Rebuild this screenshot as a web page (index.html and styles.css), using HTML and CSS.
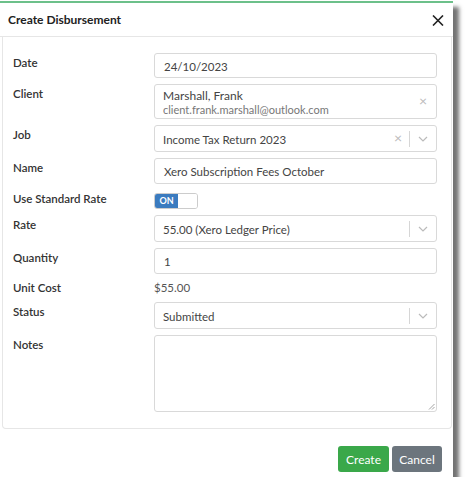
FILE: index.html
```html
<!DOCTYPE html>
<html lang="en">
<head>
<meta charset="utf-8">
<title>Create Disbursement</title>
<link rel="stylesheet" href="styles.css">
</head>
<body>
<div class="dialog">
  <div class="header">
    <h1 class="title">Create Disbursement</h1>
    <button class="close" aria-label="Close">
      <svg width="12" height="11" viewBox="0 0 12 11"><path d="M1 0.5 L11 10.5 M11 0.5 L1 10.5" stroke="#222" stroke-width="1.6" fill="none"/></svg>
    </button>
  </div>
  <div class="body">
    <div class="row r-date">
      <label class="lbl">Date</label>
      <div class="ctl input">24/10/2023</div>
    </div>
    <div class="row r-client">
      <label class="lbl">Client</label>
      <div class="ctl select client">
        <div class="client-text">
          <div class="client-name">Marshall, Frank</div>
          <div class="client-email">client.frank.marshall@outlook.com</div>
        </div>
        <span class="clear">×</span>
      </div>
    </div>
    <div class="row r-job">
      <label class="lbl">Job</label>
      <div class="ctl select">
        <span class="val">Income Tax Return 2023</span>
        <span class="clear">×</span>
        <span class="sep"></span>
        <span class="chev"><svg width="10" height="6" viewBox="0 0 10 6"><path d="M1 1 L5 5 L9 1" stroke="#bbb" stroke-width="1.2" fill="none"/></svg></span>
      </div>
    </div>
    <div class="row r-name">
      <label class="lbl">Name</label>
      <div class="ctl input">Xero Subscription Fees October</div>
    </div>
    <div class="row r-toggle">
      <label class="lbl">Use Standard Rate</label>
      <div class="toggle"><span class="on">ON</span><span class="off"></span></div>
    </div>
    <div class="row r-rate">
      <label class="lbl">Rate</label>
      <div class="ctl select">
        <span class="val">55.00 (Xero Ledger Price)</span>
        <span class="sep"></span>
        <span class="chev"><svg width="10" height="6" viewBox="0 0 10 6"><path d="M1 1 L5 5 L9 1" stroke="#bbb" stroke-width="1.2" fill="none"/></svg></span>
      </div>
    </div>
    <div class="row r-qty">
      <label class="lbl">Quantity</label>
      <div class="ctl input">1</div>
    </div>
    <div class="row r-unit">
      <label class="lbl">Unit Cost</label>
      <div class="static">$55.00</div>
    </div>
    <div class="row r-status">
      <label class="lbl">Status</label>
      <div class="ctl select">
        <span class="val">Submitted</span>
        <span class="sep"></span>
        <span class="chev"><svg width="10" height="6" viewBox="0 0 10 6"><path d="M1 1 L5 5 L9 1" stroke="#bbb" stroke-width="1.2" fill="none"/></svg></span>
      </div>
    </div>
    <div class="row r-notes">
      <label class="lbl">Notes</label>
      <div class="ctl textarea">
        <svg class="grip" width="7" height="7" viewBox="0 0 7 7"><path d="M6.5 1 L1 6.5 M6.5 4 L4 6.5" stroke="#999" stroke-width="0.9" fill="none"/></svg>
      </div>
    </div>
  </div>
  <div class="footer">
    <button class="btn btn-create">Create</button>
    <button class="btn btn-cancel">Cancel</button>
  </div>
</div>
</body>
</html>
```
FILE: styles.css
```css
html, body {
  margin: 0;
  padding: 0;
  background: #fff;
}
body {
  font-family: Lato, "Open Sans", sans-serif;
  font-size: 11.5px;
  color: #333;
  padding-top: 1px;
}
.dialog {
  width: 453px;
  height: 474px;
  border-top: 2px solid #6cc08a;
  background: #fff;
  box-shadow: 6px 6px 4px rgba(0, 0, 0, 0.55);
  display: flex;
  flex-direction: column;
}
.header {
  height: 33px;
  display: flex;
  align-items: center;
  justify-content: space-between;
  padding: 0 8px 0 8px;
  border-bottom: 1px solid #e6e6e6;
}
.title {
  margin: 0;
  font-size: 12px;
  font-weight: 700;
  color: #222;
}
.close {
  border: 0;
  background: none;
  padding: 0;
  margin-right: 1px;
  display: flex;
  margin-top: 1px;
}
.body {
  margin: 0 1px 0 2px;
  border: 1px solid #e6e6e6;
  border-top: 0;
  border-radius: 0 0 4px 4px;
  padding: 16px 15px 16px 10px;
  display: flex;
  flex-direction: column;
  gap: 6px;
}
.row {
  display: grid;
  grid-template-columns: 141px 283px;
  align-items: start;
}
.lbl {
  font-weight: 600;
  color: #333;
  line-height: 16px;
  padding-top: 2px;
}
.ctl {
  box-sizing: border-box;
  border: 1px solid #d9d9d9;
  border-radius: 3px;
  color: #444;
  background: #fff;
}
.input {
  height: 26px;
  line-height: 24px;
  padding: 1px 8px 0 9px;
}
.r-date .input { height: 25px; }
.select {
  height: 27px;
  display: flex;
  align-items: center;
  padding: 1px 0 0 8px;
}
.select .val { flex: 1; }
.clear {
  color: #bbb;
  font-size: 14px;
  line-height: 14px;
  margin-top: -2px;
}
.select .clear { margin-right: 7px; }
.sep {
  width: 1px;
  height: 16px;
  background: #d6d6d6;
  margin-top: -1px;
}
.chev {
  width: 26px;
  display: flex;
  justify-content: center;
  margin-top: -1px;
}
.client {
  height: 35px;
  padding: 0 9px 0 8px;
}
.client-text { flex: 1; }
.client-name { line-height: 15px; color: #444; font-size: 12px; }
.client-email { line-height: 13px; font-size: 11px; color: #777; }
.client .clear { margin-right: 0; }
.r-toggle .lbl { padding-top: 1px; }
.toggle {
  margin-top: 3px;
  width: 44px;
  height: 16px;
  box-sizing: border-box;
  display: flex;
  border: 1px solid #ccc;
  border-radius: 3px;
  overflow: hidden;
}
.toggle .on {
  width: 23px;
  background: #3b7bbf;
  color: #fff;
  font-size: 9px;
  font-weight: 700;
  line-height: 14px;
  text-align: center;
}
.toggle .off { flex: 1; background: #fff; }
.r-unit .lbl { padding-top: 0; }
.static {
  color: #555;
  line-height: 16px;
}
.textarea {
  height: 77px;
  position: relative;
}
.grip {
  position: absolute;
  right: 1px;
  bottom: 1px;
}
.footer {
  flex: 1;
  display: flex;
  justify-content: flex-end;
  align-items: flex-start;
  gap: 3px;
  padding: 17px 11px 0 0;
}
.btn {
  font-family: inherit;
  font-size: 12px;
  color: #fff;
  border: 0;
  border-radius: 3px;
  height: 26px;
  padding: 0;
  width: 51px;
}
.btn-create { background: #3aa84a; }
.btn-cancel { background: #6c757d; width: 50px; }
```
